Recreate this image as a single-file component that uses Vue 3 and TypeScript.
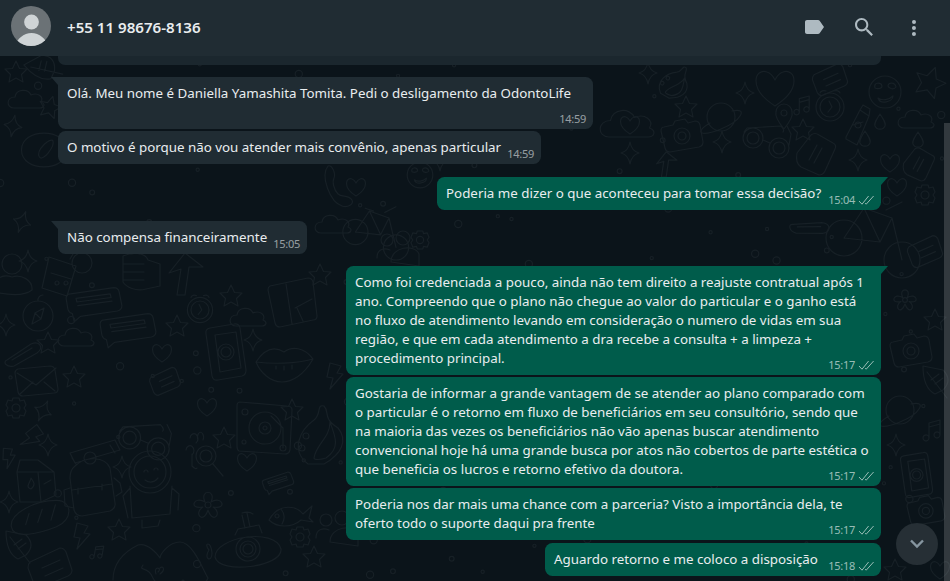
<script setup lang="ts">
interface Message {
  out: boolean;
  tail: boolean;
  width: number;
  gap: number;
  lines: string[];
  time: string;
}

interface Doodle {
  k: string;
  x: number;
  y: number;
  r?: number;
  s?: number;
}

const messages: Message[] = [
  { out: false, tail: true, width: 535, gap: 12, time: '14:59', lines: ['Olá. Meu nome é Daniella Yamashita Tomita. Pedi o desligamento da OdontoLife', ' '] },
  { out: false, tail: false, width: 483, gap: 2, time: '14:59', lines: ['O motivo é porque não vou atender mais convênio, apenas particular'] },
  { out: true, tail: true, width: 444, gap: 13, time: '15:04', lines: ['Poderia me dizer o que aconteceu para tomar essa decisão?'] },
  { out: false, tail: true, width: 249, gap: 11, time: '15:05', lines: ['Não compensa financeiramente'] },
  {
    out: true, tail: true, width: 535, gap: 12, time: '15:17',
    lines: [
      'Como foi credenciada a pouco, ainda não tem direito a reajuste contratual após 1',
      'ano. Compreendo que o plano não chegue ao valor do particular e o ganho está',
      'no fluxo de atendimento levando em consideração o numero de vidas em sua',
      'região, e que em cada atendimento a dra recebe a consulta + a limpeza +',
      'procedimento principal.',
    ],
  },
  {
    out: true, tail: false, width: 535, gap: 2, time: '15:17',
    lines: [
      'Gostaria de informar a grande vantagem de se atender ao plano comparado com',
      'o particular é o retorno em fluxo de beneficiários em seu consultório, sendo que',
      'na maioria das vezes os beneficiários não vão apenas buscar atendimento',
      'convencional hoje há uma grande busca por atos não cobertos de parte estética o',
      'que beneficia os lucros e retorno efetivo da doutora.',
    ],
  },
  {
    out: true, tail: false, width: 535, gap: 2, time: '15:17',
    lines: ['Poderia nos dar mais uma chance com a parceria? Visto a importância dela, te', 'oferto todo o suporte daqui pra frente'],
  },
  { out: true, tail: false, width: 336, gap: 3, time: '15:18', lines: ['Aguardo retorno e me coloco a disposição'] },
];

// circle as path, so every doodle can be one <path>
const c = (x: number, y: number, r: number): string =>
  `M${x - r} ${y}a${r} ${r} 0 1 0 ${r * 2} 0a${r} ${r} 0 1 0 ${-r * 2} 0Z`;

const shapes: Record<string, string> = {
  star: 'M0-11L3.5-3.5 11-3 5.5 2.5 7 10 0 6-7 10-5.5 2.5-11-3-3.5-3.5Z',
  sparkle: 'M0-11Q1.5-2 9 0Q1.5 2 0 11Q-1.5 2-9 0Q-1.5-2 0-11Z',
  heart: 'M0 9C-14 0-10-10-4-8C-2-7.5-1-6 0-4C1-6 2-7.5 4-8C10-10 14 0 0 9Z',
  cloud: 'M-14 8C-22 8-22-3-13-3C-12-11 0-12 3-5C10-8 16-3 13 2C18 4 16 8 12 8Z',
  bolt: 'M-5-12L6-9 2-2 8-1-5 14-2 3-8 2Z',
  note: 'M-3 8a3 3 0 1 1 0-.1V-7L8-10V5a3 3 0 1 1 0-.1M-3-3L8-6',
  drop: 'M0-8C4-2 6 1 5 4A5.5 5.5 0 0 1-5 4C-6 1-4-2 0-8Z',
  pin: `M0 12C-8 2-9-2-8-5A8 8 0 0 1 8-5C9-2 8 2 0 12Z${c(0, -4, 3)}`,
  gear: `${c(0, 0, 4)}M-3-10L3-10 4-7 8-8 10-3 8 0 10 3 8 8 4 7 3 10-3 10-4 7-8 8-10 3-8 0-10-3-8-8-4-7Z`,
  flower: `${c(0, 0, 3)}M-3-3C-9-16 9-16 3-3C14-10 20 5 5 2C15 8 5 20 0 5C-5 20-15 8-5 2C-20 5-14-10-3-3Z`,
  clock: `${c(0, 0, 14)}${c(0, 0, 10)}M-1-6L2 0-2 5M-10-14a4 3 0 0 1 6-2M10-14a4 3 0 0 0-6-2`,
  chat: 'M-26-9L22-16Q27-16 28-11L31 4Q31 9 26 10L-15 16-22 22-24 13Q-28 12-29 8L-31-4Q-31-9-26-9ZM-20-4L18-9 19-5-19 0-20-4ZM-18 4L20-1',
  phone: `M-14-24L10-28Q15-29 16-24L22 18Q22 23 18 24L-6 28Q-11 29-12 24L-18-18Q-19-23-14-24ZM-9-17L12-20 17 16-4 20Z${c(2, 0, 8)}${c(2, 0, 5)}`,
  camera: `M-17-8L-8-10-6-14 4-16 7-12 14-14Q18-14 19-10L22 7Q22 11 18 12L-11 17Q-15 17-16 13L-20-4Q-20-8-17-8Z${c(1, 1, 8)}${c(1, 1, 4)}`,
  planet: `${c(0, 0, 14)}M-11 6C-28 16-20 20 0 12C20 4 28-10 11-6`,
  faces: `${c(0, 0, 16)}M-10-4C-12-10-4-10-3-6C-3-3-8-3-10-4ZM3-6C3-10 10-10 11-5C9-2 4-3 3-6ZM-7 6C-3 9 4 8 8 4C8 10-5 13-7 6Z`,
  bottle: `M-9 12L5-15 14-9 2 20-9 14ZM5-15L8-20 15-16 14-9M-2 0L8-3${c(3, 0, 3)}`,
  bag: 'M-18-2L-4-20Q0-23 4-20L18-12Q22-10 20-6L10 16Q8 20 4 20L-14 12Q-20 8-18-2ZM-6 5L2-10M-1 8L7-7',
  glasses: `${c(-14, -2, 10)}${c(-14, -2, 6)}${c(12, 8, 10)}${c(12, 8, 6)}M-4 0L3 3M-23-8L-20-12 14-14Q18-10 16-8M22 5L24-6 20-14`,
  bean: `M-25 0C-25-25 25-25 25 0C25 25-25 25-25 0ZM-5 8C-10 0 8-15 10-10C12-4-1 13-5 8Z`,
  milk: 'M-19-8L-16-20 2-20 18-8 20 15 5 22-16 22-19-8ZM-19-8L2-8 18-8M2-8L5 22M-8 6C-7 2-5 0-5-2C-2 2 0 5-5 9Q-8 8-8 6ZM8 4L15 0',
  pack: `M-20-25L25-38 30-28-15-15ZM-18-20L-14-14M20-33L25-25${c(0, -20, 6)}M-15-12C-5-22 15-22 20-10L25 25Q26 30 20 33L-8 38Q-14 38-16 32L-20 0Q-20-8-15-12ZM-18 12L22 6M-12 10V16M12 6V12M-20 10L-26 12-25 28-16 30M24 0L30 5 32 14 26 18`,
  astro: `${c(0, -18, 21)}${c(0, -18, 16)}M-6-18a2 2 0 0 1 4 0M4-20a2 2 0 0 1 4 0M-5-10Q2-5 8-12M-20-4L-18 28 20 24 22-4M-20-2L-27 6-22 28M22-2L29 4 28 20M-8 30V38L8 36 10 30`,
  bread: 'M-26 8C-28-4-5-16 15-16C30-16 30 2 15 8C0 14-24 20-26 8ZM-10-4L-13 6M2-8L-2 4M14-12L10 2',
  leaf: 'M-12-14L8-10Q18 0 8 10L0 14Q-12 8-12-14ZM-8-8L12 18M-4 0L4-6M0 4L8-2',
  card: 'M-20-4L10-18Q14-18 16-14L22 4Q22 8 18 10L-10 22Q-14 22-16 18L-22 2Q-22-2-20-4ZM-8 2L10-6M-5 10L13 2',
  hands: 'M-45 20C-45 0-30-10-20-15C-10-18 0-5 2-2C2-5 10-18 22-18C35-18 45 10 50 18C45 30 30 25 25 20C15 30 0 28-5 18C-10 5-20 12-15 5M-2 14C-5 5 5 8 0 12M2 8C5 5 8 10 2 14',
  lens: `${c(0, 0, 10)}${c(0, 0, 6)}M7 8L17 20M-16-18a4 5 0 1 1 6 5M-8-16a3 5 0 1 1 5 0M-20-6a4 5 0 1 1 6 5M-14-2V10Q-10 14-9 12`,
  table: `M-25-26L22-22Q27-22 27-18L25 22Q24 26 20 26L-26 23Q-28 22-28 18L-28-22Q-28-26-25-26Z${c(0, 0, 16)}${c(0, 0, 6)}${c(0, 0, 2)}M6-12L18 0V20${c(18, 20, 3)}${c(-20, -16, 3)}${c(-21, 14, 2)}`,
  fish: `M-18 6C-8-12 10-8 16 0L25-8 22 4 26 8 14 6C5 14-10 14-18 6ZM-6-5C-2 0-2 5-5 10${c(-10, 2, 2)}`,
  sub: `M-30 12C-30-8 30-18 36 4C38 22-26 30-30 12ZM-10-10L-7-16 14-20 17-12M0-17L-3-30M5-18L2-32M-3-32Q4-34 8-31${c(3, 4, 12)}${c(3, 4, 8)}${c(3, 4, 5)}M-36 5C-42-2-34-5-33 8C-33 18-42 14-36 5Z`,
  people: `${c(-8, -10, 6)}${c(8, -12, 7)}M-18 8C-18-2-10-2-5 0M-4 12C-4-4 20-6 24 4V16Z`,
  flame: `M-14 24C-32 10-22-10-8-20C0-26-6-36 2-34C8-28 0-22 16-12C26 0 20 14 2 24ZM-8 18C-6 4 8-2 8-18C14-2 18 8 4 18C-2 20-8 20-8 18Z${c(-16, -4, 3)}${c(-20, 8, 3)}`,
  bike: `${c(-28, 0, 18)}${c(30, 22, 18)}M-28 0L-8-30 20-20 30 22M-8-30L8 4-28 0M8 4L20-20M-14-34L-2-30M14-28L30-36`,
  compass: `${c(0, 0, 15)}M0-15a5 5 0 0 1 5-6M6-8L3 3-6 8-3-3ZM-3-3L3 3`,
  map: 'M-22-14L16-22Q20-22 21-18L25 16Q25 20 21 20L-12 27Q-16 27-17 23L-24-10Q-24-13-22-14ZM-6-16L0 24M3 8L20-1M5 8L11 21',
  lips: 'M-28 0C-18-15-8-15 0-10C8-16 20-15 29-3C20 13 8 20-2 20C-14 20-24 10-28 0ZM-28 0C-12 2 12 2 29-3M-8 4V7M0 4V8M8 3V7',
  clip: 'M-15 8L9-8C18-12 22-4 15 1L-8 14C-15 16-20 10-15 8ZM-10 8L10-4',
  mail: 'M-20-9L12-12Q16-12 17-8L20 11Q20 15 16 15L-15 18Q-19 18-20 14L-23-5Q-23-8-20-9ZM-21-5L-2 7 18-10M-18 16L-5 4M17 13L6 4',
  person: `${c(0, -8, 10)}M-18 20C-20 5-8 2 0 5C9 2 21 8 20 18Q10 26-18 20Z`,
  drink: `M-13-18L14-9 5 21-20 13ZM8-16L14-26${c(20, -12, 10)}M-11-2L9 4${c(-5, 8, 2)}${c(4, 8, 2)}`,
  fist: 'M-17-16C-8-20 5-20 8-12L20-8 20 14 6 17C-4 20-14 15-17 10ZM-17-8L4-8M-17 0L4 0M-17 8L4 8M-8-18L-8-28Q-3-32-1-25V-18',
  arrow: 'M-6 20L-2-6-14-2 2-22 20-8 6-8 2 20Z',
  tele: 'M-12-18C-8-20-4-10-6-6C-8-2-6 6-2 10C2 14 8 10 12 16C14 20 8 24 2 22C-10 18-20-8-12-18Z',
};

const doodles: Doodle[] = [
  { k: 'star', x: 16, y: 72 }, { k: 'bean', x: 44, y: 150, s: 0.9 }, { k: 'leaf', x: 42, y: 68, r: -40 },
  { k: 'cloud', x: 28, y: 100 }, { k: 'star', x: 50, y: 107, r: 15 }, { k: 'sparkle', x: 13, y: 126, r: 10 },
  { k: 'person', x: 12, y: 272 }, { k: 'sparkle', x: 22, y: 222, r: 20 }, { k: 'sparkle', x: 28, y: 261 },
  { k: 'drink', x: 62, y: 275 }, { k: 'fist', x: 140, y: 272 }, { k: 'arrow', x: 183, y: 275 },
  { k: 'map', x: 292, y: 300 }, { k: 'chat', x: 94, y: 302, s: 0.9 }, { k: 'chat', x: 128, y: 328, s: 0.9 },
  { k: 'compass', x: 38, y: 316 }, { k: 'clock', x: 200, y: 310, s: 0.9 }, { k: 'star', x: 231, y: 296 },
  { k: 'cloud', x: 250, y: 318 }, { k: 'star', x: 177, y: 326 }, { k: 'sparkle', x: 253, y: 340 },
  { k: 'phone', x: 224, y: 352 }, { k: 'lips', x: 284, y: 362 }, { k: 'clip', x: 22, y: 352 },
  { k: 'heart', x: 162, y: 353 }, { k: 'star', x: 48, y: 343 }, { k: 'cloud', x: 78, y: 338 }, { k: 'sparkle', x: 6, y: 325 },
  { k: 'mail', x: 38, y: 378 }, { k: 'star', x: 74, y: 377 },
  { k: 'card', x: 165, y: 380, s: 0.7 }, { k: 'gear', x: 16, y: 408 }, { k: 'sparkle', x: 43, y: 411, r: 25 },
  { k: 'bolt', x: 33, y: 437, r: 40 }, { k: 'bolt', x: 9, y: 457, r: -10, s: 0.8 }, { k: 'sparkle', x: 48, y: 445 },
  { k: 'milk', x: 36, y: 480 }, { k: 'sparkle', x: 9, y: 502 }, { k: 'bread', x: 40, y: 518, s: 1.1 },
  { k: 'leaf', x: 18, y: 545 }, { k: 'card', x: 50, y: 566 }, { k: 'pack', x: 90, y: 478 },
  { k: 'sparkle', x: 122, y: 467 }, { k: 'astro', x: 150, y: 490 }, { k: 'bolt', x: 82, y: 535 },
  { k: 'star', x: 119, y: 530 }, { k: 'note', x: 97, y: 552, s: 0.7, r: 10 }, { k: 'hands', x: 158, y: 560 },
  { k: 'glasses', x: 145, y: 440, s: 1.1 }, { k: 'lens', x: 206, y: 456 }, { k: 'flower', x: 208, y: 505 },
  { k: 'star', x: 224, y: 438 }, { k: 'heart', x: 247, y: 462 }, { k: 'heart', x: 207, y: 407 },
  { k: 'table', x: 265, y: 428 }, { k: 'star', x: 292, y: 410 }, { k: 'chat', x: 278, y: 482, s: 0.5, r: -10 },
  { k: 'fish', x: 287, y: 514 }, { k: 'sub', x: 245, y: 545 }, { k: 'gear', x: 300, y: 537 },
  { k: 'star', x: 314, y: 557 }, { k: 'flame', x: 322, y: 440 }, { k: 'people', x: 334, y: 530 },
  { k: 'cloud', x: 630, y: 125, s: 1.5 }, { k: 'heart', x: 630, y: 125 }, { k: 'flame', x: 675, y: 85, s: 0.6, r: 30 },
  { k: 'sparkle', x: 648, y: 73 }, { k: 'star', x: 686, y: 107 }, { k: 'planet', x: 721, y: 117 },
  { k: 'camera', x: 681, y: 135 }, { k: 'sparkle', x: 722, y: 142 }, { k: 'heart', x: 775, y: 88, s: 2 },
  { k: 'pin', x: 784, y: 117 }, { k: 'note', x: 802, y: 105, s: 0.9 }, { k: 'clock', x: 830, y: 107 },
  { k: 'bottle', x: 855, y: 125 }, { k: 'faces', x: 885, y: 92 }, { k: 'glasses', x: 767, y: 140 },
  { k: 'star', x: 803, y: 130 }, { k: 'bag', x: 815, y: 155 }, { k: 'sparkle', x: 858, y: 160 },
  { k: 'heart', x: 890, y: 163 }, { k: 'drop', x: 880, y: 122 }, { k: 'drop', x: 865, y: 139 },
  { k: 'card', x: 830, y: 78, s: 0.8 }, { k: 'arrow', x: 665, y: 165, s: 0.6 },
  { k: 'sparkle', x: 630, y: 153 }, { k: 'sparkle', x: 745, y: 93 },
  { k: 'cloud', x: 918, y: 120 }, { k: 'drop', x: 918, y: 140 }, { k: 'star', x: 930, y: 82, r: 20, s: 1.4 },
  { k: 'bag', x: 918, y: 165, s: 0.8 },
  { k: 'tele', x: 340, y: 184 }, { k: 'heart', x: 356, y: 187 }, { k: 'bike', x: 375, y: 232, s: 0.7 },
  { k: 'faces', x: 420, y: 175, s: 0.8 }, { k: 'people', x: 395, y: 250 }, { k: 'cloud', x: 335, y: 225 },
  { k: 'bike', x: 872, y: 238 }, { k: 'heart', x: 897, y: 187 }, { k: 'gear', x: 925, y: 195 },
  { k: 'clip', x: 810, y: 225, r: 30 }, { k: 'card', x: 925, y: 250, s: 0.8 }, { k: 'flower', x: 905, y: 300, s: 0.8 },
  { k: 'star', x: 935, y: 320 }, { k: 'camera', x: 910, y: 350 }, { k: 'leaf', x: 935, y: 380 },
  { k: 'planet', x: 900, y: 410 }, { k: 'note', x: 932, y: 430 }, { k: 'sparkle', x: 896, y: 445 },
  { k: 'phone', x: 915, y: 475, s: 0.8 }, { k: 'camera', x: 925, y: 510, s: 0.9 },
  { k: 'star', x: 895, y: 570 }, { k: 'heart', x: 940, y: 570 },
  { k: 'star', x: 320, y: 275 }, { k: 'bolt', x: 335, y: 375 },
  { k: 'gear', x: 420, y: 240, s: 0.9 }, { k: 'sparkle', x: 440, y: 160 },
];

// seeded so the dots stay put between renders
let seed = 17;
const rnd = (): number => {
  seed = (seed * 16807) % 2147483647;
  return seed / 2147483647;
};
const dots: { x: number; y: number; r: number }[] = [];
for (let i = 0; i < 900 && dots.length < 190; i++) {
  const x = rnd() * 950;
  const y = 60 + rnd() * 521;
  const clear = doodles.every((d) => Math.hypot(d.x - x, d.y - y) > 17 * (d.s ?? 1) + (['hands', 'map', 'lips', 'sub', 'bike', 'astro', 'pack'].includes(d.k) ? 14 : 0));
  if (clear && dots.every((p) => Math.hypot(p.x - x, p.y - y) > 13)) {
    dots.push({ x, y, r: rnd() > 0.7 ? 3.6 : rnd() > 0.5 ? 2.4 : 1.6 });
  }
}

const place = (d: Doodle): string => `translate(${d.x} ${d.y}) rotate(${d.r ?? 0}) scale(${d.s ?? 1})`;
</script>

<template>
  <div class="app">
    <svg class="wall" width="950" height="581" viewBox="0 0 950 581" fill="none" stroke="#172026" stroke-width="1.2" stroke-linejoin="round" stroke-linecap="round">
      <path v-for="(d, i) in doodles" :key="i" :d="shapes[d.k]" :transform="place(d)" vector-effect="non-scaling-stroke" />
      <circle v-for="(p, i) in dots" :key="'dot' + i" :cx="p.x" :cy="p.y" :r="p.r" />
    </svg>

    <header class="topbar">
      <svg class="avatar" width="40" height="40" viewBox="0 0 40 40">
        <defs>
          <clipPath id="avatar-clip"><circle cx="20" cy="20" r="20" /></clipPath>
        </defs>
        <circle cx="20" cy="20" r="20" fill="#6b7276" />
        <g clip-path="url(#avatar-clip)" fill="#cfd4d6">
          <circle cx="20.5" cy="16" r="7.4" />
          <path d="M5 40C5 33 13 27 20.5 27S36 33 36 40Z" />
        </g>
      </svg>
      <div class="title">+55 11 98676-8136</div>
      <div class="actions">
        <svg width="24" height="24" viewBox="0 0 24 24"><path d="M17.63 5.84C17.27 5.33 16.67 5 16 5L5 5.01C3.9 5.01 3 5.9 3 7v10c0 1.1.9 1.99 2 1.99L16 19c.67 0 1.27-.33 1.63-.84L22 12l-4.37-6.16z" /></svg>
        <svg width="24" height="24" viewBox="0 0 24 24"><path d="M15.9 14.3H15l-.3-.3c1-1.1 1.6-2.7 1.6-4.3 0-3.7-3-6.7-6.7-6.7S3 6 3 9.7s3 6.7 6.7 6.7c1.6 0 3.2-.6 4.3-1.6l.3.3v.8l5.1 5.1 1.5-1.5-5-5.2zm-6.2 0c-2.6 0-4.6-2.1-4.6-4.6s2.1-4.6 4.6-4.6 4.6 2.1 4.6 4.6-2 4.6-4.6 4.6z" /></svg>
        <svg width="24" height="24" viewBox="0 0 24 24"><path d="M12 7a2 2 0 1 0-.001-4.001A2 2 0 0 0 12 7zm0 2a2 2 0 1 0-.001 3.999A2 2 0 0 0 12 9zm0 6a2 2 0 1 0-.001 3.999A2 2 0 0 0 12 15z" transform="translate(0 2)" /></svg>
      </div>
    </header>

    <main class="messages">
      <div class="clipped"></div>
      <div
        v-for="(m, i) in messages"
        :key="i"
        class="bubble"
        :class="{ out: m.out, tail: m.tail }"
        :style="{ width: m.width + 'px', marginTop: m.gap + 'px' }"
      >
        <div v-for="(line, j) in m.lines" :key="j" class="line">{{ line }}</div>
        <div class="meta">
          <span>{{ m.time }}</span>
          <svg v-if="m.out" width="17" height="10" viewBox="0 0 17 10" fill="none" stroke="currentColor" stroke-width="1">
            <path d="M1 6l3 3.2L10.6 1M7.2 8.2l1 1L15.6 1" />
          </svg>
        </div>
      </div>
    </main>

    <div class="scroll-thumb"></div>
    <button class="down" type="button" aria-label="Rolar para baixo">
      <svg width="16" height="10" viewBox="0 0 16 10" fill="none" stroke="#8696a0" stroke-width="2.4"><path d="M2 1.5l6 6 6-6" /></svg>
    </button>
  </div>
</template>

<style>
html,
body {
  margin: 0;
  background: #0b141a;
}
</style>

<style scoped>
.app {
  position: relative;
  width: 950px;
  height: 581px;
  overflow: hidden;
  display: flex;
  flex-direction: column;
  background: #0b141a;
  color: #e9edef;
  font-family: "Noto Sans", "Open Sans", sans-serif;
}

.wall {
  position: absolute;
  top: 0;
  left: 0;
}

.topbar {
  position: relative;
  flex: none;
  height: 40px;
  display: flex;
  align-items: center;
  padding: 6px 24px 10px 11px;
  background: #202c33;
}

.avatar {
  flex: none;
}

.title {
  margin-left: 16px;
  margin-top: 2px;
  font-size: 15.1px;
  font-weight: 600;
}

.actions {
  margin-left: auto;
  margin-top: 2px;
  display: flex;
  gap: 26px;
  fill: #aebac1;
}

.actions svg {
  display: block;
}

.messages {
  position: relative;
  flex: 1;
  min-height: 0;
  display: flex;
  flex-direction: column;
  padding: 0 69px 0 58px;
}

.clipped {
  flex: none;
  height: 9px;
  background: #1b272e;
  border-radius: 0 0 7px 7px;
}

.bubble {
  position: relative;
  flex: none;
  box-sizing: border-box;
  padding: 7px 9px;
  background: #202c33;
  border-radius: 7.5px;
  font-size: 13.35px;
  line-height: 19px;
}

.bubble.out {
  align-self: flex-end;
  background: #005c4b;
}

.line {
  white-space: pre;
}

.bubble.tail {
  border-top-left-radius: 0;
}

.bubble.out.tail {
  border-top-left-radius: 7.5px;
  border-top-right-radius: 0;
}

.bubble.tail::before {
  content: "";
  position: absolute;
  top: 0;
  left: -7px;
  width: 7px;
  height: 8px;
  background: inherit;
  clip-path: polygon(0 0, 100% 0, 100% 100%);
}

.bubble.out.tail::before {
  left: auto;
  right: -7px;
  clip-path: polygon(0 0, 100% 0, 0 100%);
}

.meta {
  position: absolute;
  right: 7px;
  bottom: 3px;
  display: flex;
  align-items: center;
  gap: 3px;
  font-size: 11px;
  letter-spacing: -0.25px;
  line-height: 15px;
  color: rgba(233, 237, 239, 0.6);
}

.bubble.out .meta {
  right: 6px;
  color: rgba(255, 255, 255, 0.6);
}

.scroll-thumb {
  position: absolute;
  top: 123px;
  right: 0;
  bottom: 0;
  width: 6px;
  background: rgba(255, 255, 255, 0.16);
}

.down {
  position: absolute;
  left: 896px;
  top: 523px;
  width: 42px;
  height: 42px;
  padding: 0;
  display: flex;
  align-items: center;
  justify-content: center;
  border: 0;
  border-radius: 50%;
  background: #262f35;
}
</style>
